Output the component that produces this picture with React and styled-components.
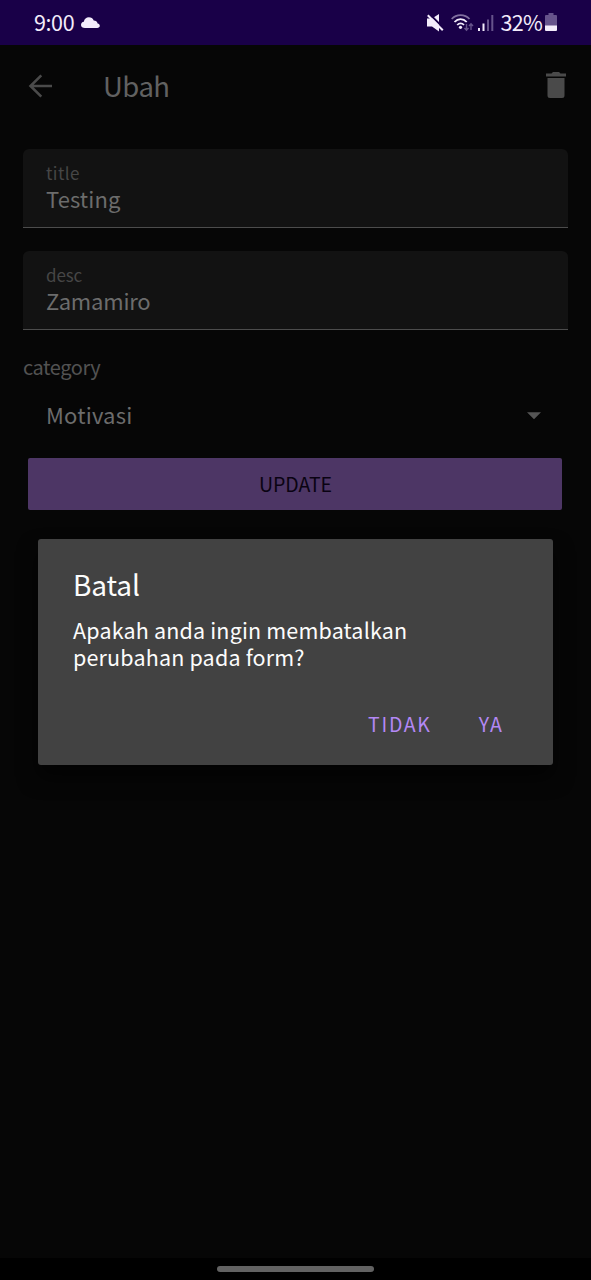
import React from "react";
import styled, { createGlobalStyle } from "styled-components";

const GlobalStyle = createGlobalStyle`
  * { box-sizing: border-box; }
  body { margin: 0; background: #060606; font-family: "Noto Sans CJK JP", "Noto Sans", sans-serif; }
  button { font-family: inherit; border: 0; padding: 0; background: none; }
  h1, h2, p { margin: 0; font-weight: 400; }
  svg { display: block; }
`;

const Screen = styled.div`
  position: relative;
  display: flex;
  flex-direction: column;
  width: 591px;
  height: 1280px;
  overflow: hidden;
  background: #060606;
`;

const StatusBar = styled.header`
  display: flex;
  align-items: center;
  justify-content: space-between;
  flex: none;
  height: 45px;
  padding: 0 34px;
  background: #190048;
  color: #f3ecfb;
  font-size: 21.5px;
  line-height: 43px;
`;

const StatusGroup = styled.div`
  display: flex;
  align-items: center;
  height: 45px;
`;

const Clock = styled.span`
  height: 45px;
  letter-spacing: -0.4px;
  margin-right: 7px;
`;

const Percent = styled.span`
  height: 45px;
  margin-left: 6px;
  letter-spacing: -0.7px;
`;

const Toolbar = styled.div`
  display: flex;
  align-items: center;
  flex: none;
  height: 82px;
  padding: 0 25px 0 28px;
`;

const PageTitle = styled.h1`
  flex: 1;
  margin-left: 50px;
  height: 42px;
  color: #616161;
  font-size: 27.5px;
  line-height: 40px;
  letter-spacing: -0.5px;
`;

const IconButton = styled.button`
  display: flex;
  margin-bottom: ${(p) => p.$lift || 0}px;
`;

const Form = styled.main`
  display: flex;
  flex-direction: column;
  flex: 1;
  padding: 22px 23px 0;
`;

const Field = styled.label`
  display: flex;
  flex-direction: column;
  height: 79px;
  margin-bottom: 23px;
  padding: 11px 23px 0;
  border-bottom: 1px solid #4c4c4c;
  border-radius: 6px 6px 0 0;
  background: #121212;
`;

const FieldLabel = styled.span`
  height: 24px;
  color: #464646;
  font-size: 17px;
  line-height: 25px;
  letter-spacing: ${(p) => p.$tracking}px;
`;

const FieldValue = styled.span`
  height: 30px;
  color: #6c6c6c;
  font-size: 22px;
  line-height: 28px;
  letter-spacing: ${(p) => p.$tracking}px;
`;

const CategoryLabel = styled.div`
  height: 28px;
  color: #525252;
  font-size: 20px;
  line-height: 28px;
  letter-spacing: -0.45px;
`;

const Select = styled.div`
  display: flex;
  align-items: center;
  justify-content: space-between;
  height: 40px;
  margin-top: 14px;
  padding: 0 27px 0 23px;
  color: #6c6c6c;
`;

const UpdateButton = styled.button`
  height: 52px;
  margin: 23px 6px 0 5px;
  padding: 0 0 2px 1px;
  border-radius: 2px;
  background: #4d3665;
  color: #0a0312;
  font-size: 19.5px;
  letter-spacing: -0.1px;
`;

const Dialog = styled.section`
  position: absolute;
  top: 539px;
  left: 38px;
  display: flex;
  flex-direction: column;
  width: 515px;
  height: 226px;
  padding: 25px 35px 0;
  border-radius: 3px;
  background: #424242;
  color: #fcfcfc;
  box-shadow: 0 12px 20px rgba(0, 0, 0, 0.6);
`;

const DialogTitle = styled.h2`
  font-size: 28px;
  line-height: 40px;
  letter-spacing: -0.1px;
`;

const DialogText = styled.p`
  margin-top: 12px;
  font-size: 21.5px;
  line-height: 27px;
  letter-spacing: 0.17px;
`;

const DialogActions = styled.div`
  display: flex;
  justify-content: flex-end;
  gap: 47px;
  margin-top: 40px;
  padding-right: 15px;
`;

const DialogButton = styled.button`
  color: #b388f5;
  font-size: 19.5px;
  line-height: 28px;
  letter-spacing: ${(p) => p.$tracking}px;
`;

const NavigationBar = styled.footer`
  display: flex;
  justify-content: center;
  flex: none;
  height: 22px;
  padding-top: 8px;
  background: #000;
`;

const HomeHandle = styled.div`
  width: 157px;
  height: 6px;
  border-radius: 3px;
  background: #626262;
`;

const CloudIcon = () => (
  <svg width="19" height="12" viewBox="0 0 19 12" fill="#f3ecfb">
    <path d="M4 11C1.600 11 0 9.700 0 7.900 0 6.300 1.200 5 2.800 4.800 3.300 2 5.300.3 7.900.3c2.200 0 4 1.200 4.800 3.200 2 0 3.600 1.200 3.900 3 1.300.3 2.200 1.100 2.200 2.300C18.800 10.100 17.700 11 16.200 11Z" />
  </svg>
);

const MuteIcon = () => (
  <svg width="17" height="18" viewBox="0 0 17 18">
    <path d="M0 4.500h5l7-4.500v17.500l-7-5H0Z" fill="#f3ecfb" />
    <path d="M2.500 0 17 14.500" stroke="#190048" strokeWidth="2" />
    <path d="M.8 1.300 15.800 16.300" stroke="#f3ecfb" strokeWidth="2" />
  </svg>
);

const WifiIcon = () => (
  <svg width="23" height="18" viewBox="0 0 23 18" fill="none" strokeWidth="1.800">
    <path d="M.7 5C5.500-.2 13.700-.2 18.500 5" stroke="#8170a0" />
    <path d="M3.500 8C7 4.200 12.200 4.200 15.700 8" stroke="#f3ecfb" />
    <path d="M6.200 11c2-2.100 4.800-2.100 6.800 0" stroke="#f3ecfb" />
    <circle cx="9.500" cy="13.300" r="1.600" fill="#f3ecfb" />
    <path d="M15.500 10v6m-2-2 2 2.200 2-2.200M20 16v-6m-2 2 2-2.200L22 12" stroke="#66538b" strokeWidth="1.400" />
  </svg>
);

const SignalIcon = () => (
  <svg width="16" height="18" viewBox="0 0 16 18">
    <path d="M0 14h2v3H0ZM4.500 9.500h2V17h-2Z" fill="#f3ecfb" />
    <path d="M9 5.500h2V17H9ZM13.300 1h2v16h-2Z" fill="#66538b" />
  </svg>
);

const BatteryIcon = () => (
  <svg width="12" height="19" viewBox="0 0 12 19">
    <path d="M3.500 0h5v2H11q1 0 1 1v10H0V3q0-1 1-1h2.500Z" fill="#66538b" />
    <path d="M0 12.500h12V17q0 1-1 1H1q-1 0-1-1Z" fill="#f3ecfb" />
  </svg>
);

const BackIcon = () => (
  <svg width="25" height="24" viewBox="0 0 25 24" fill="none" stroke="#4a4a4a" strokeWidth="2.600">
    <path d="M24 12H3M13.300 1.300 2.500 12l10.800 10.700" />
  </svg>
);

const TrashIcon = () => (
  <svg width="20" height="26" viewBox="0 0 20 26" fill="#4a4a4a">
    <path d="M0 1.500h5.500L7 0h6l1.500 1.500H20v3H0ZM1.500 6h17v17.500q0 2.500-2.500 2.500H4q-2.500 0-2.500-2.500Z" />
  </svg>
);

const CaretIcon = () => (
  <svg width="14" height="8" viewBox="0 0 14 8" fill="#555">
    <path d="M0 .3h14L7 7.300Z" />
  </svg>
);

const StatusIcon = styled.span`
  margin-left: ${(p) => p.$gap || 0}px;
  margin-top: ${(p) => p.$drop || 0}px;
`;

const fields = [
  { label: "title", value: "Testing", labelTracking: 0.4, valueTracking: 0.1 },
  { label: "desc", value: "Zamamiro", labelTracking: -0.1, valueTracking: -0.2 },
];

export default function App() {
  return (
    <>
      <GlobalStyle />
      <Screen>
        <StatusBar>
          <StatusGroup>
            <Clock>9:00</Clock>
            <StatusIcon><CloudIcon /></StatusIcon>
          </StatusGroup>
          <StatusGroup>
            <StatusIcon><MuteIcon /></StatusIcon>
            <StatusIcon $gap={7}><WifiIcon /></StatusIcon>
            <StatusIcon $gap={4} $drop={1}><SignalIcon /></StatusIcon>
            <Percent>32%</Percent>
            <StatusIcon $gap={3}><BatteryIcon /></StatusIcon>
          </StatusGroup>
        </StatusBar>
        <Toolbar>
          <IconButton aria-label="Kembali"><BackIcon /></IconButton>
          <PageTitle>Ubah</PageTitle>
          <IconButton aria-label="Hapus" $lift={2}><TrashIcon /></IconButton>
        </Toolbar>
        <Form>
          {fields.map((f) => (
            <Field key={f.label}>
              <FieldLabel $tracking={f.labelTracking}>{f.label}</FieldLabel>
              <FieldValue $tracking={f.valueTracking}>{f.value}</FieldValue>
            </Field>
          ))}
          <CategoryLabel>category</CategoryLabel>
          <Select>
            <FieldValue $tracking={0.2}>Motivasi</FieldValue>
            <StatusIcon $drop={2}><CaretIcon /></StatusIcon>
          </Select>
          <UpdateButton>UPDATE</UpdateButton>
        </Form>
        <NavigationBar><HomeHandle /></NavigationBar>
        <Dialog role="dialog">
          <DialogTitle>Batal</DialogTitle>
          <DialogText>Apakah anda ingin membatalkan<br />perubahan pada form?</DialogText>
          <DialogActions>
            <DialogButton $tracking={1.7}>TIDAK</DialogButton>
            <DialogButton $tracking={1.2}>YA</DialogButton>
          </DialogActions>
        </Dialog>
      </Screen>
    </>
  );
}
